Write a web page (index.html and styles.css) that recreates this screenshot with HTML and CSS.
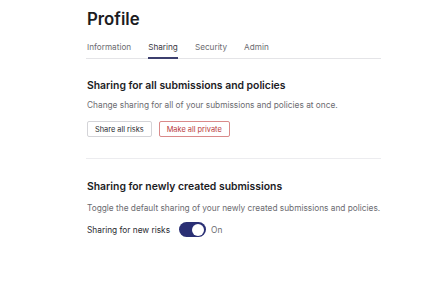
FILE: index.html
```html
<!DOCTYPE html>
<html lang="en">
<head>
    <meta charset="UTF-8">
    <title>Profile</title>
    <link rel="stylesheet" href="styles.css">
</head>
<body>
    <div class="page">
        <h1 class="title">Profile</h1>

        <nav class="tabs">
            <a class="tab">Information</a>
            <a class="tab active">Sharing</a>
            <a class="tab">Security</a>
            <a class="tab">Admin</a>
        </nav>

        <section class="section">
            <h2>Sharing for all submissions and policies</h2>
            <p class="desc">Change sharing for all of your submissions and policies at once.</p>
            <div class="actions">
                <button class="btn">Share all risks</button>
                <button class="btn btn-danger">Make all private</button>
            </div>
        </section>

        <hr class="divider">

        <section class="section second">
            <h2>Sharing for newly created submissions</h2>
            <p class="desc">Toggle the default sharing of your newly created submissions and policies.</p>
            <div class="toggle-row">
                <span class="toggle-label">Sharing for new risks</span>
                <span class="switch on"><span class="knob"></span></span>
                <span class="toggle-state">On</span>
            </div>
        </section>
    </div>
</body>
</html>
```

FILE: styles.css
```css
body {
    margin: 0;
    font-family: Inter, "Noto Sans", sans-serif;
    background: #fff;
    color: #1c1c1f;
}
.page {
    width: 295px;
    padding: 7px 0 0 86px;
}
.title {
    margin: 0 0 0 1px;
    font-size: 16.8px;
    font-weight: 600;
    line-height: 24px;
}
.tabs {
    display: flex;
    gap: 17px;
    margin-top: 8px;
    padding-left: 1px;
    border-bottom: 1px solid #e4e4e7;
}
.tab {
    font-size: 8.2px;
    color: #6b6b70;
    padding: 3px 0 5px;
    border-bottom: 2px solid transparent;
    margin-bottom: -1px;
}
.tab.active {
    color: #3a3a44;
    border-bottom-color: #3c3f6e;
}
.section {
    padding-left: 1px;
    margin-top: 19px;
}
.section h2 {
    margin: 0;
    font-size: 10.4px;
    font-weight: 600;
    line-height: 16px;
}
.desc {
    margin: 5px 0 0;
    font-size: 8.3px;
    line-height: 12px;
    color: #6b6b70;
}
.actions {
    display: flex;
    gap: 7px;
    margin-top: 10px;
}
.btn {
    font-family: inherit;
    font-size: 7.4px;
    height: 16px;
    padding: 0 7px;
    background: #fff;
    border: 1px solid #d4d4d8;
    border-radius: 2px;
    color: #2a2a30;
}
.btn-danger {
    border-color: #d98a8a;
    color: #b83a3a;
}
.divider {
    margin: 21px 0 0;
    border: 0;
    border-top: 1px solid #ececef;
}
.section.second {
    margin-top: 20px;
}
.section.second .desc {
    margin-top: 7px;
}
.toggle-row {
    display: flex;
    align-items: center;
    margin-top: 8px;
    font-size: 8.3px;
    color: #2a2a30;
}
.switch {
    width: 27px;
    height: 15px;
    border-radius: 8px;
    background: #2a2f74;
    margin-left: 9px;
    display: flex;
    align-items: center;
    justify-content: flex-end;
    padding: 0 2px;
    box-sizing: border-box;
}
.knob {
    width: 12px;
    height: 12px;
    border-radius: 50%;
    background: #fff;
}
.toggle-state {
    margin-left: 5px;
    color: #6b6b70;
}
```
